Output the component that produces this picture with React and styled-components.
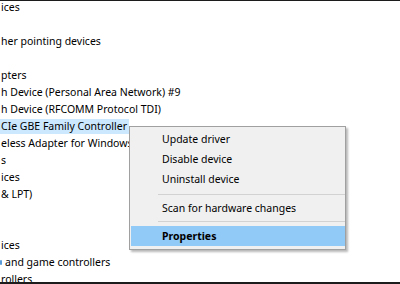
import React from "react";
import styled, { createGlobalStyle } from "styled-components";

const Global = createGlobalStyle`
  html, body { margin: 0; padding: 0; background: #fff; }
  body { font-family: "Noto Sans", "Open Sans", sans-serif; }
`;

const Frame = styled.div`
  position: relative;
  width: 400px;
  height: 284px;
  box-sizing: border-box;
  border-top: 1px solid #1c1c1c;
  border-bottom: 2px solid #1c1c1c;
  overflow: hidden;
  background: #fff;
`;

const List = styled.div`
  display: flex;
  flex-direction: column;
  margin-top: -2.5px;
`;

const Row = styled.div`
  display: flex;
  align-items: center;
  height: 17px;
  flex: 0 0 auto;
  font-size: 10.5px;
  color: #000;
  white-space: nowrap;
`;

const Label = styled.span`
  display: inline-flex;
  align-items: center;
  height: 15px;
  padding: 0 2px 0 ${(p) => p.$indent || 0}px;
  background: ${(p) => (p.$selected ? "#cce8ff" : "transparent")};
`;

const IconSliver = styled.span`
  display: inline-block;
  width: 2px;
  height: 5px;
  margin-right: 3px;
  background: #5a9bd8;
  border-radius: 1px;
`;

const Menu = styled.div`
  position: absolute;
  left: 129px;
  top: 125px;
  width: 217px;
  box-sizing: border-box;
  padding: 2px 0 3px 1px;
  background: #f0f0f0;
  border: 1px solid #a0a0a0;
  box-shadow: 2px 2px 2px rgba(0, 0, 0, 0.28);
  display: flex;
  flex-direction: column;
  font-size: 10.5px;
  color: #000;
`;

const Item = styled.div`
  height: 20px;
  display: flex;
  align-items: center;
  padding-left: 31px;
  font-weight: ${(p) => (p.$bold ? 700 : 400)};
  background: ${(p) => (p.$active ? "#91c9f7" : "transparent")};
  white-space: nowrap;
`;

const Separator = styled.div`
  height: 1px;
  margin: ${(p) => p.$top}px 0 ${(p) => p.$bottom}px 27px;
  background: #d2d2d2;
`;

const rows = [
  { t: "ices" },
  { t: "" },
  { t: "her pointing devices" },
  { t: "" },
  { t: "pters" },
  { t: "h Device (Personal Area Network) #9" },
  { t: "h Device (RFCOMM Protocol TDI)" },
  { t: "CIe GBE Family Controller", selected: true },
  { t: "eless Adapter for Windows" },
  { t: "s" },
  { t: "ices" },
  { t: "& LPT)" },
  { t: "" },
  { t: "" },
  { t: "ices" },
  { t: "and game controllers", icon: true },
  { t: "rollers" },
];

export default function App() {
  return (
    <>
      <Global />
      <Frame>
        <List>
          {rows.map((r, i) => (
            <Row key={i}>
              {r.icon && <IconSliver />}
              <Label $selected={r.selected} $indent={r.icon ? 0 : 1}>
                {r.t}
              </Label>
            </Row>
          ))}
        </List>
        <Menu>
          <Item>Update driver</Item>
          <Item>Disable device</Item>
          <Item>Uninstall device</Item>
          <Separator $top={5} $bottom={3} />
          <Item>Scan for hardware changes</Item>
          <Separator $top={3} $bottom={4} />
          <Item $active $bold>
            Properties
          </Item>
        </Menu>
      </Frame>
    </>
  );
}
